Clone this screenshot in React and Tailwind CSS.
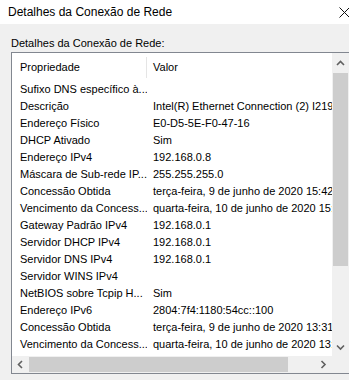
import React from 'react'

const rows = [
  ['Sufixo DNS específico à...', ''],
  ['Descrição', 'Intel(R) Ethernet Connection (2) I219-V'],
  ['Endereço Físico', 'E0-D5-5E-F0-47-16'],
  ['DHCP Ativado', 'Sim'],
  ['Endereço IPv4', '192.168.0.8'],
  ['Máscara de Sub-rede IP...', '255.255.255.0'],
  ['Concessão Obtida', 'terça-feira, 9 de junho de 2020 15:42:18'],
  ['Vencimento da Concess...', 'quarta-feira, 10 de junho de 2020 15:42:18'],
  ['Gateway Padrão IPv4', '192.168.0.1'],
  ['Servidor DHCP IPv4', '192.168.0.1'],
  ['Servidor DNS IPv4', '192.168.0.1'],
  ['Servidor WINS IPv4', ''],
  ['NetBIOS sobre Tcpip H...', 'Sim'],
  ['Endereço IPv6', '2804:7f4:1180:54cc::100'],
  ['Concessão Obtida', 'terça-feira, 9 de junho de 2020 13:31:05'],
  ['Vencimento da Concess...', 'quarta-feira, 10 de junho de 2020 13:31:05'],
  ['', '2804:7f4:1180:54cc:a1b7:f08:a1f4:d54'],
]

const Chevron = ({ dir }) => {
  const d = {
    up: 'M1 5 L4.5 1.5 L8 5',
    down: 'M1 1.5 L4.5 5 L8 1.5',
    left: 'M5 1 L1.5 4.5 L5 8',
    right: 'M1.5 1 L5 4.5 L1.5 8',
  }[dir]
  const w = dir === 'up' || dir === 'down' ? 9 : 7
  const h = dir === 'up' || dir === 'down' ? 7 : 9
  return (
    <svg width={w} height={h} viewBox={`0 0 ${w} ${h}`} fill="none">
      <path d={d} stroke="#606060" strokeWidth="1.6" />
    </svg>
  )
}

export default function App() {
  return (
    <div className="w-[349px] h-[380px] overflow-hidden bg-[#f0f0f0] text-black text-[11px]"
      style={{ fontFamily: '"Liberation Sans", Arial, sans-serif' }}>
      {/* title bar */}
      <div className="h-6 bg-white flex items-center justify-between pl-2">
        <span className="text-[12px]">Detalhes da Conexão de Rede</span>
        <svg width="11" height="11" viewBox="0 0 11 11" className="-mr-[1px]">
          <path d="M0.5 0.5 L10.5 10.5 M10.5 0.5 L0.5 10.5" stroke="#111" strokeWidth="1" />
        </svg>
      </div>

      <div className="pl-[11px] pt-[12px]">
        <div className="leading-[14px] mb-[2px]">Detalhes da Conexão de Rede:</div>

        {/* list box */}
        <div className="w-[360px] h-[322px] border border-[#828790] bg-white flex flex-col">
          <div className="flex flex-1 min-h-0">
            <div className="w-[320px] overflow-hidden">
              <div className="h-[28px] flex items-center">
                <div className="w-[134px] pl-[8px] whitespace-nowrap">Propriedade</div>
                <div className="h-[21px] w-px bg-[#e5e5e5]" />
                <div className="pl-[6px] whitespace-nowrap">Valor</div>
              </div>
              {rows.map(([k, v], i) => (
                <div key={i} className="h-[17px] flex items-center whitespace-nowrap">
                  <div className="w-[135px] shrink-0 pl-[8px] overflow-hidden">{k}</div>
                  <div className="pl-[6px] shrink-0">{v}</div>
                </div>
              ))}
            </div>
            {/* vertical scrollbar */}
            <div className="w-[17px] bg-[#f0f0f0] flex flex-col items-center">
              <div className="h-[20px] flex items-center justify-center"><Chevron dir="up" /></div>
              <div className="w-[15px] h-[193px] bg-[#cdcdcd]" />
              <div className="flex-1" />
              <div className="h-[17px] flex items-center justify-center"><Chevron dir="down" /></div>
            </div>
          </div>
          {/* horizontal scrollbar */}
          <div className="h-[17px] flex shrink-0">
            <div className="w-[320px] bg-[#f0f0f0] flex items-center">
              <div className="w-[17px] flex items-center justify-center"><Chevron dir="left" /></div>
              <div className="w-[259px] h-[15px] bg-[#cdcdcd]" />
              <div className="flex-1" />
              <div className="w-[17px] flex items-center justify-center"><Chevron dir="right" /></div>
            </div>
            <div className="w-[17px] bg-[#f0f0f0]" />
          </div>
        </div>
      </div>
    </div>
  )
}
